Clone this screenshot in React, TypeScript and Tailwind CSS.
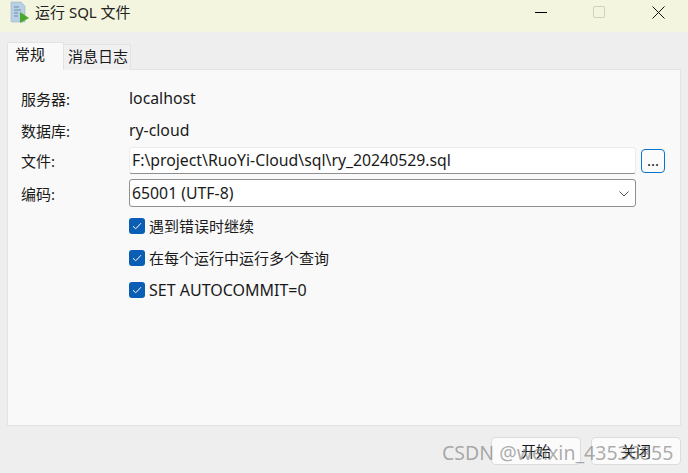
const font = '[font-family:"Noto_Sans","Noto_Sans_CJK_SC",sans-serif]';

function Check({ label, latin }: { label: string; latin?: boolean }) {
  return (
    <div className="h-8 flex items-center gap-1">
      <div className="w-4 h-4 rounded-[3px] bg-[#0a5fb4] flex items-center justify-center">
        <svg width="10" height="8" viewBox="0 0 10 8" fill="none">
          <path d="M1 4.2 L3.7 6.8 L9 1.2" stroke="#fff" strokeWidth="1" />
        </svg>
      </div>
      <span className={(latin ? "text-[16px]" : "text-[15px]") + " text-[#1a1a1a]"}>{label}</span>
    </div>
  );
}

function Row({ label, children, className, labelClass }: { label: string; children: React.ReactNode; className?: string; labelClass?: string }) {
  return (
    <div className={"flex items-center " + (className ?? "")}>
      <div className={"w-[108px] text-[15px] text-[#1a1a1a] " + (labelClass ?? "")}>{label}</div>
      {children}
    </div>
  );
}

export default function App() {
  return (
    <div className={"w-[688px] h-[473px] relative overflow-hidden flex flex-col bg-[#eeeeee] " + font}>
      {/* title bar */}
      <div className="h-8 bg-[#f3f5de] flex items-center shrink-0 pb-[8px]">
        <svg className="ml-[10px]" width="19" height="22" viewBox="0 0 19 22">
          <path d="M1 1 H11 L15 5 V21 H2 Q1 21 1 20 Z" fill="#b9cfe4" stroke="#8fa9c2" strokeWidth="0.5" />
          <path d="M4 6 H9 M4 9 H11 M4 12 H8 M4 15 H8" stroke="#6d8cab" strokeWidth="1" />
          <path d="M10 11 L19 17 L10 22 Z" fill="#4aa82c" />
        </svg>
        <span className="ml-[6px] text-[15px] text-[#222]">运行 SQL 文件</span>
        <div className="ml-auto flex items-center">
          <div className="w-3 h-px bg-black" />
          <div className="ml-[46px] w-3 h-3 rounded-[2px] border border-[#cfd1bb]" />
          <svg className="ml-[47px] mr-[23px]" width="13" height="13" viewBox="0 0 13 13">
            <path d="M0.5 0.5 L12.5 12.5 M12.5 0.5 L0.5 12.5" stroke="#111" strokeWidth="1" />
          </svg>
        </div>
      </div>

      {/* tabs */}
      <div className="ml-[7px] mr-[7px] mt-[10px] flex items-end h-[28px] shrink-0 relative z-10">
        <div className="w-[57px] h-[28px] bg-[#f9f9f9] border border-b-0 border-[#e3e3e3] rounded-t-[2px] flex pl-[7px] text-[15px] text-[#1a1a1a]">常规</div>
        <div className="w-[67px] h-[26px] bg-[#f0f0f0] border border-l-0 border-b-0 border-[#e3e3e3] pl-[4px] text-[15px] text-[#1a1a1a]">消息日志</div>
      </div>

      {/* panel */}
      <div className="mx-[7px] -mt-px h-[357px] shrink-0 bg-[#f9f9f9] border border-[#e3e3e3] pl-[13px] pt-[13px]">
        <Row label="服务器:" className="h-8"><span className="text-[15.8px] text-[#1a1a1a]">localhost</span></Row>
        <Row label="数据库:" className="h-8"><span className="text-[15.8px] text-[#1a1a1a]">ry-cloud</span></Row>
        <Row label="文件:" className="h-[27px]" labelClass="pt-[2px]">
          <div className="w-[507px] h-[27px] bg-white border border-[#ececec] border-b-[#8f8f8f] rounded-[3px] pl-[2px] flex items-center text-[15.8px] text-[#1a1a1a]">F:\project\RuoYi-Cloud\sql\ry_20240529.sql</div>
          <div className="ml-[5px] w-6 h-6 bg-[#fbfbfb] border border-[#0a74d0] rounded-[4px] flex items-center justify-center text-[15px] leading-none text-[#1a1a1a]">...</div>
        </Row>
        <Row label="编码:" className="h-[28px] mt-[5px]" labelClass="pt-[2px]">
          <div className="w-[507px] h-[28px] bg-white border border-[#8f8f8f] rounded-[3px] pl-[2px] pr-[6px] pt-[1px] flex items-center justify-between text-[15.8px] text-[#1a1a1a]">
            <span>65001 (UTF-8)</span>
            <svg width="10" height="6" viewBox="0 0 10 6" fill="none">
              <path d="M0.5 0.5 L5 5 L9.5 0.5" stroke="#555" strokeWidth="1" />
            </svg>
          </div>
        </Row>
        <div className="ml-[108px] mt-[3px]">
          <Check label="遇到错误时继续" />
          <Check label="在每个运行中运行多个查询" />
          <Check label="SET AUTOCOMMIT=0" latin />
        </div>
      </div>

      {/* footer buttons */}
      <div className="mt-[11px] ml-[491px] flex gap-[10px]">
        <div className="w-[90px] h-[28px] bg-[#fbfbfb] border border-[#dcdcdc] rounded-[4px] flex items-center justify-center text-[15px] text-[#1a1a1a]">开始</div>
        <div className="w-[90px] h-[28px] bg-[#fbfbfb] border border-[#dcdcdc] rounded-[4px] flex items-center justify-center text-[15px] text-[#1a1a1a]">关闭</div>
      </div>

      {/* watermark */}
      <div className="absolute left-[442px] top-[440px] text-[19.5px] leading-[26px] text-[#777]/60 whitespace-nowrap">CSDN @weixin_43536855</div>
    </div>
  );
}
